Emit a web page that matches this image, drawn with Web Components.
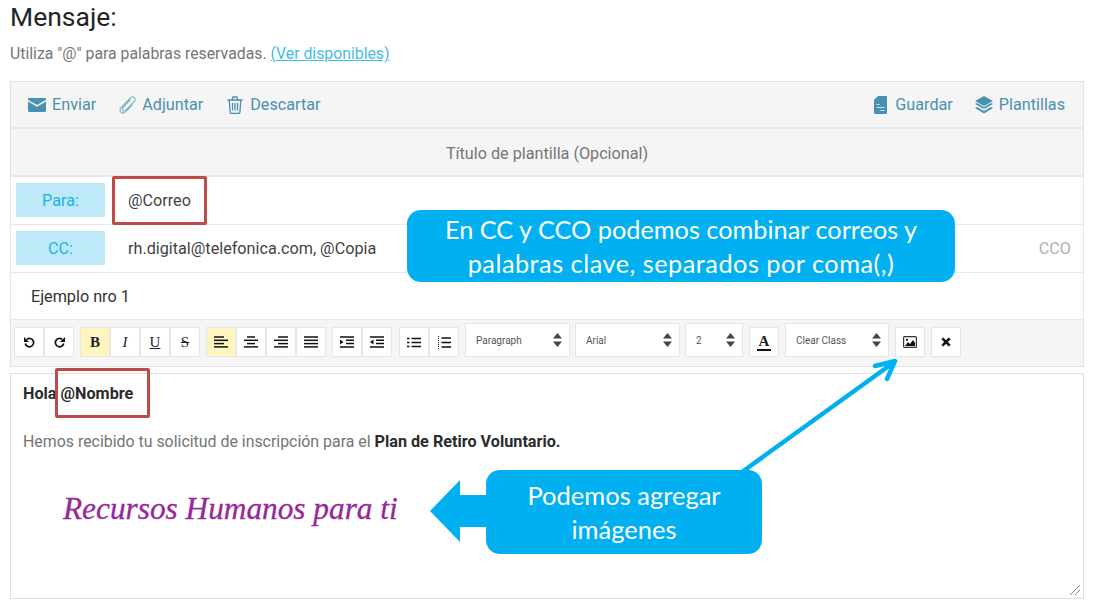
<!DOCTYPE html>
<html lang="es">
<head>
<meta charset="utf-8">
<title>Mensaje</title>
<style>
  html, body { margin: 0; background: #fff; font-family: Roboto, sans-serif; }
  body { width: 1093px; height: 604px; overflow: hidden; position: relative; }
</style>
</head>
<body>
<mail-page>
  <mail-toolbar>
    <tool-link icon="envelope">Enviar</tool-link>
    <tool-link icon="clip">Adjuntar</tool-link>
    <tool-link icon="trash">Descartar</tool-link>
    <tool-link icon="card" slot="right" style="margin-right:-1px">Guardar</tool-link>
    <tool-link icon="layers" slot="right">Plantillas</tool-link>
  </mail-toolbar>
  <title-row>Título de plantilla (Opcional)</title-row>
  <address-row label="Para:">@Correo</address-row>
  <address-row label="CC:" extra="CCO">rh.digital@telefonica.com, @Copia</address-row>
  <subject-row>Ejemplo nro 1</subject-row>
  <editor-toolbar></editor-toolbar>
  <editor-body></editor-body>
</mail-page>
<note-layer></note-layer>

<script>
const ICONS = {
  envelope: '<svg width="18" height="14" viewBox="0 0 18 14"><path fill="#4a90b2" d="M0 1.2C0 .5.5 0 1.2 0h15.6c.7 0 1.2.5 1.2 1.2v.5L9 7 0 1.7z"/><path fill="#4a90b2" d="M0 3.6l9 5.2 9-5.2v9.2c0 .7-.5 1.2-1.2 1.2H1.2C.5 14 0 13.500 0 12.800z"/></svg>',
  clip: '<svg width="17" height="18" viewBox="0 0 17 18" fill="none" stroke="#7fb2cb" stroke-width="1.100"><path d="M11.500 3.500 4 11.500c-1 1.100-1 2.300-.2 3 .8.700 2 .6 3-.4L14.800 6c1.500-1.600 1.500-3.300.5-4.300-1.100-1-2.800-.9-4.300.6L2.500 11c-1.800 2-1.800 4-.6 5.200 1.200 1.200 3.300 1 5.100-.8l6.500-6.800"/></svg>',
  trash: '<svg width="16" height="18" viewBox="0 0 16 18" fill="none" stroke="#4a90b2" stroke-width="1.300" style="margin:0 1px 0 1px"><path d="M.5 4h15M5.200 3.800 6 1h4l.8 2.800M2.200 4l.9 12.200c0 .7.500 1.200 1.200 1.200h7.400c.7 0 1.200-.5 1.200-1.200L13.800 4M5.500 7v7.500M8 7v7.500M10.500 7v7.500"/></svg>',
  card: '<svg width="13" height="18" viewBox="0 0 13 18" style="margin-right:2px"><path fill="#4a90b2" d="M4 0h7.800c.7 0 1.200.5 1.200 1.200v15.600c0 .7-.5 1.200-1.200 1.200H1.200C.5 18 0 17.500 0 16.800V4z"/><path stroke="#cfe3ec" stroke-width="1" d="M2.500 8.500h3M2.500 11.500h8M6.500 14.500h4"/></svg>',
  layers: '<svg width="18" height="18" viewBox="0 0 18 18"><path fill="#4a90b2" d="M9 0l9 5-9 5-9-5z"/><path fill="#4a90b2" d="M0 8l2-1.100L9 11l7-4.100L18 8l-9 5z"/><path fill="#4a90b2" d="M0 12l2-1.100L9 15l7-4.100L18 12l-9 5.500z"/></svg>'
};

class MailPage extends HTMLElement {
  constructor() {
    super();
    this.attachShadow({ mode: 'open' }).innerHTML = `
      <style>
        :host { display: block; padding: 0 9px 0 10px; color: #212121; }
        h1 { font: 400 26.500px/30px Roboto, sans-serif; margin: 2px 0 0; color: #212529; }
        p { font: 400 15.800px/20px Roboto, sans-serif; margin: 12px 0 17px; color: #757575; }
        a { color: #3fbde8; text-decoration: underline; }
      </style>
      <h1>Mensaje:</h1>
      <p>Utiliza "@" para palabras reservadas. <a href="#">(Ver disponibles)</a></p>
      <slot></slot>`;
  }
}

class MailToolbar extends HTMLElement {
  constructor() {
    super();
    this.attachShadow({ mode: 'open' }).innerHTML = `
      <style>
        :host { display: flex; justify-content: space-between; align-items: center; box-sizing: border-box;
          height: 48px; padding: 0 18px 0 17px; background: #f5f5f5; border: 1px solid #e3e3e3; border-bottom: 2px solid #e8e8e8; }
        div { display: flex; align-items: center; gap: 23px; }
      </style>
      <div><slot></slot></div>
      <div><slot name="right"></slot></div>`;
  }
}

class ToolLink extends HTMLElement {
  constructor() {
    super();
    this.attachShadow({ mode: 'open' }).innerHTML = `
      <style>
        :host { display: inline-flex; align-items: center; gap: 6px; font: 400 16.200px/20px Roboto, sans-serif; color: #4a90b2; }
        svg { display: block; }
      </style>
      ${ICONS[this.getAttribute('icon')]}<slot></slot>`;
  }
}

class TitleRow extends HTMLElement {
  constructor() {
    super();
    this.attachShadow({ mode: 'open' }).innerHTML = `
      <style>
        :host { display: flex; align-items: center; justify-content: center; box-sizing: border-box; height: 48px; padding-top: 3px;
          background: #f5f5f5; border: 1px solid #e3e3e3; border-width: 0 1px 2px; border-bottom-color: #e8e8e8;
          font: 400 16.200px/20px Roboto, sans-serif; color: #757575; }
      </style>
      <slot></slot>`;
  }
}

class AddressRow extends HTMLElement {
  constructor() {
    super();
    const extra = this.getAttribute('extra');
    this.attachShadow({ mode: 'open' }).innerHTML = `
      <style>
        :host { display: flex; align-items: center; box-sizing: border-box; height: 48px; padding: 0 12px 1px 5px;
          border: 1px solid #e8e8e8; border-width: 0 1px 1px; font: 400 16.200px/20px Roboto, sans-serif; color: #424242; }
        b { font-weight: 400; box-sizing: border-box; width: 89px; height: 34px; padding-top: 2px; margin-right: 23px; display: flex; align-items: center; justify-content: center;
          background: #bde9f8; color: #1fb2ea; }
        span { flex: 1; padding-top: 2px; }
        i { font-style: normal; color: #b0b0b0; padding-top: 2px; }
      </style>
      <b>${this.getAttribute('label')}</b><span><slot></slot></span>${extra ? `<i>${extra}</i>` : ''}`;
  }
}

class SubjectRow extends HTMLElement {
  constructor() {
    super();
    this.attachShadow({ mode: 'open' }).innerHTML = `
      <style>
        :host { display: flex; align-items: center; box-sizing: border-box; height: 47px; padding: 2px 0 0 20px;
          border: 1px solid #e8e8e8; border-width: 0 1px 1px; font: 400 16.200px/20px Roboto, sans-serif; color: #333; }
      </style>
      <slot></slot>`;
  }
}

class EditButton extends HTMLElement {
  constructor() {
    super();
    this.attachShadow({ mode: 'open' }).innerHTML = `
      <style>
        :host { display: flex; align-items: center; justify-content: center; box-sizing: border-box; width: 30px; height: 30px;
          background: #fff; border: 1px solid #e6e6e6; font: 15px/1 "Liberation Serif", serif; color: #222; }
        :host([active]) { background: #fff5bf; }
      </style>
      <slot></slot>`;
  }
}

class EditSelect extends HTMLElement {
  constructor() {
    super();
    this.attachShadow({ mode: 'open' }).innerHTML = `
      <style>
        :host { display: flex; align-items: center; justify-content: space-between; box-sizing: border-box; height: 34px;
          padding: 0 7px 0 10px; background: #fff; border: 1px solid #e6e6e6; font: 400 10px/12px Roboto, sans-serif; color: #555; }
        span { padding-top: 2px; }
        svg { display: block; }
      </style>
      <span><slot></slot></span>
      <svg width="9" height="14" viewBox="0 0 9 14"><path fill="#444" d="M4.500 0 9 5.500H0zM4.500 14 0 8.500h9z"/></svg>`;
  }
}

const lines = rows => `<svg width="14" height="12" viewBox="0 0 14 12" stroke="#111" stroke-width="1.500">${
  rows.map((r, i) => `<path d="M${r[0]} ${1 + i * 3.3}H${r[1]}"/>`).join('')}</svg>`;

class EditorToolbar extends HTMLElement {
  constructor() {
    super();
    this.attachShadow({ mode: 'open' }).innerHTML = `
      <style>
        :host { display: flex; align-items: flex-end; gap: 6px; box-sizing: border-box; height: 47px; padding: 0 0 9px 3px;
          background: #f5f5f5; border: 1px solid #e3e3e3; border-width: 0 1px 1px; }
        .g { display: flex; gap: 0; }
        svg { display: block; }
        .a { display: block; font-weight: 700; font-size: 15px; line-height: 13px; padding: 0 2px 1px; border-bottom: 2px solid #111; color: #222; margin-top: 2px; }
      </style>
      <div class="g">
        <edit-button><svg width="11" height="11" viewBox="0 0 11 11" fill="none" stroke="#111" stroke-width="1.700"><path d="M2.800 2.300A4.200 4.200 0 1 1 1.300 6.500"/><path fill="#111" stroke="none" d="M0 0v5h5z"/></svg></edit-button>
        <edit-button><svg width="11" height="11" viewBox="0 0 11 11" fill="none" stroke="#111" stroke-width="1.700"><path d="M8.200 2.300A4.200 4.200 0 1 0 9.700 6.500"/><path fill="#111" stroke="none" d="M11 0v5H6z"/></svg></edit-button>
      </div>
      <div class="g">
        <edit-button active><b>B</b></edit-button>
        <edit-button><i>I</i></edit-button>
        <edit-button><u>U</u></edit-button>
        <edit-button><s>S</s></edit-button>
      </div>
      <div class="g">
        <edit-button active>${lines([[0,10],[0,14],[0,10],[0,14]])}</edit-button>
        <edit-button>${lines([[3,11],[0,14],[3,11],[0,14]])}</edit-button>
        <edit-button>${lines([[4,14],[0,14],[4,14],[0,14]])}</edit-button>
        <edit-button>${lines([[0,14],[0,14],[0,14],[0,14]])}</edit-button>
      </div>
      <div class="g">
        <edit-button><svg width="14" height="12" viewBox="0 0 14 12" stroke="#111" stroke-width="1.500"><path d="M0 1h14M6 4.300h8M6 7.600h8M0 11h14"/><path stroke="none" fill="#111" d="M0 3.500 3.500 6 0 8.500z"/></svg></edit-button>
        <edit-button><svg width="14" height="12" viewBox="0 0 14 12" stroke="#111" stroke-width="1.500"><path d="M0 1h14M6 4.300h8M6 7.600h8M0 11h14"/><path stroke="none" fill="#111" d="M3.500 3.500 0 6l3.500 2.500z"/></svg></edit-button>
      </div>
      <div class="g" style="margin-left:1px">
        <edit-button><svg width="14" height="11" viewBox="0 0 14 11" stroke="#111" stroke-width="1.600"><path d="M4.500 1.500H14M4.500 5.500H14M4.500 9.500H14M0 1.500h2.500M0 5.500h2.500M0 9.500h2.500"/></svg></edit-button>
        <edit-button><svg width="14" height="13" viewBox="0 0 14 13" stroke="#111"><path stroke-width="1.600" d="M4.500 2H14M4.500 6.500H14M4.500 11H14"/><path stroke-width="1" stroke-dasharray="1 1" d="M1.500 0v13"/></svg></edit-button>
      </div>
      <edit-select style="width:105px">Paragraph</edit-select>
      <edit-select style="width:105px;margin-left:-1px">Arial</edit-select>
      <edit-select style="width:58px;margin-left:-1px">2</edit-select>
      <edit-button><span class="a">A</span></edit-button>
      <edit-select style="width:104px">Clear Class</edit-select>
      <edit-button><svg width="14" height="12" viewBox="0 0 14 12"><rect x=".6" y=".6" width="12.800" height="10.800" rx="1" fill="none" stroke="#333" stroke-width="1.200"/><path fill="#111" d="M2 10l3-4 2 2 3-4 2 3v3z"/><circle cx="4" cy="3.800" r="1.100" fill="#111"/></svg></edit-button>
      <edit-button><svg width="10" height="10" viewBox="0 0 10 10" stroke="#111" stroke-width="2.600"><path d="M1.300 1.300l7.400 7.400M8.700 1.300 1.300 8.700"/></svg></edit-button>`;
  }
}

class EditorBody extends HTMLElement {
  constructor() {
    super();
    this.attachShadow({ mode: 'open' }).innerHTML = `
      <style>
        :host { display: block; position: relative; box-sizing: border-box; height: 226px; margin-top: 6px; padding: 10px 12px 0;
          border: 1px solid #e0e0e0; font: 400 15.900px/20px Roboto, sans-serif; color: #757575; }
        .hi { color: #2b2b2b; font-weight: 700; font-size: 16.200px; }
        p { margin: 28px 0 0; }
        p b { color: #2b2b2b; font-weight: 700; font-size: 16.200px; }
        .sign { margin: 37px 0 0 40px; font: italic 31.300px/40px "Liberation Serif", serif; color: #96289a; -webkit-text-stroke: .3px #96289a; }
        svg { position: absolute; right: 2px; bottom: 2px; }
      </style>
      <div class="hi">Hola @Nombre</div>
      <p>Hemos recibido tu solicitud de inscripción para el <b>Plan de Retiro Voluntario.</b></p>
      <div class="sign">Recursos Humanos para ti</div>
      <svg width="12" height="12" viewBox="0 0 12 12" stroke="#888" stroke-width="1"><path d="M1 11 11 1M6 11l5-5"/></svg>`;
  }
}

class NoteLayer extends HTMLElement {
  constructor() {
    super();
    this.attachShadow({ mode: 'open' }).innerHTML = `
      <style>
        :host { position: absolute; inset: 0; display: block; pointer-events: none; }
        .red { position: absolute; box-sizing: border-box; border: 3px solid #be4b48; border-radius: 2px; }
        .bubble { position: absolute; box-sizing: border-box; background: #00b0f0; color: #fff; border-radius: 14px;
          font: 400 25.500px/34px Lato, sans-serif; text-align: center; display: flex; align-items: center; justify-content: center; }
        .wide { letter-spacing: .5px; }
        svg { position: absolute; left: 0; top: 0; }
      </style>
      <div class="red" style="left:112px;top:176px;width:95px;height:49px"></div>
      <div class="red" style="left:55px;top:368px;width:95px;height:50px"></div>
      <svg width="1093" height="604" viewBox="0 0 1093 604">
        <path fill="none" stroke="#00b0f0" stroke-width="4.500" stroke-linecap="round" stroke-linejoin="round" d="M742 472 893 363M875 366l20-5-8 18"/>
        <path fill="#00b0f0" d="M430 511 460 480v15h28v32h-28v15z"/>
      </svg>
      <div class="bubble" style="left:407px;top:210px;width:548px;height:72px;font-size:25.300px"><div>En CC y CCO podemos combinar correos y<br><span class="wide">palabras clave, separados por coma(,)</span></div></div>
      <div class="bubble" style="left:486px;top:470px;width:276px;height:84px">Podemos agregar<br>imágenes</div>`;
  }
}

customElements.define('mail-page', MailPage);
customElements.define('mail-toolbar', MailToolbar);
customElements.define('tool-link', ToolLink);
customElements.define('title-row', TitleRow);
customElements.define('address-row', AddressRow);
customElements.define('subject-row', SubjectRow);
customElements.define('edit-button', EditButton);
customElements.define('edit-select', EditSelect);
customElements.define('editor-toolbar', EditorToolbar);
customElements.define('editor-body', EditorBody);
customElements.define('note-layer', NoteLayer);
</script>
</body>
</html>
